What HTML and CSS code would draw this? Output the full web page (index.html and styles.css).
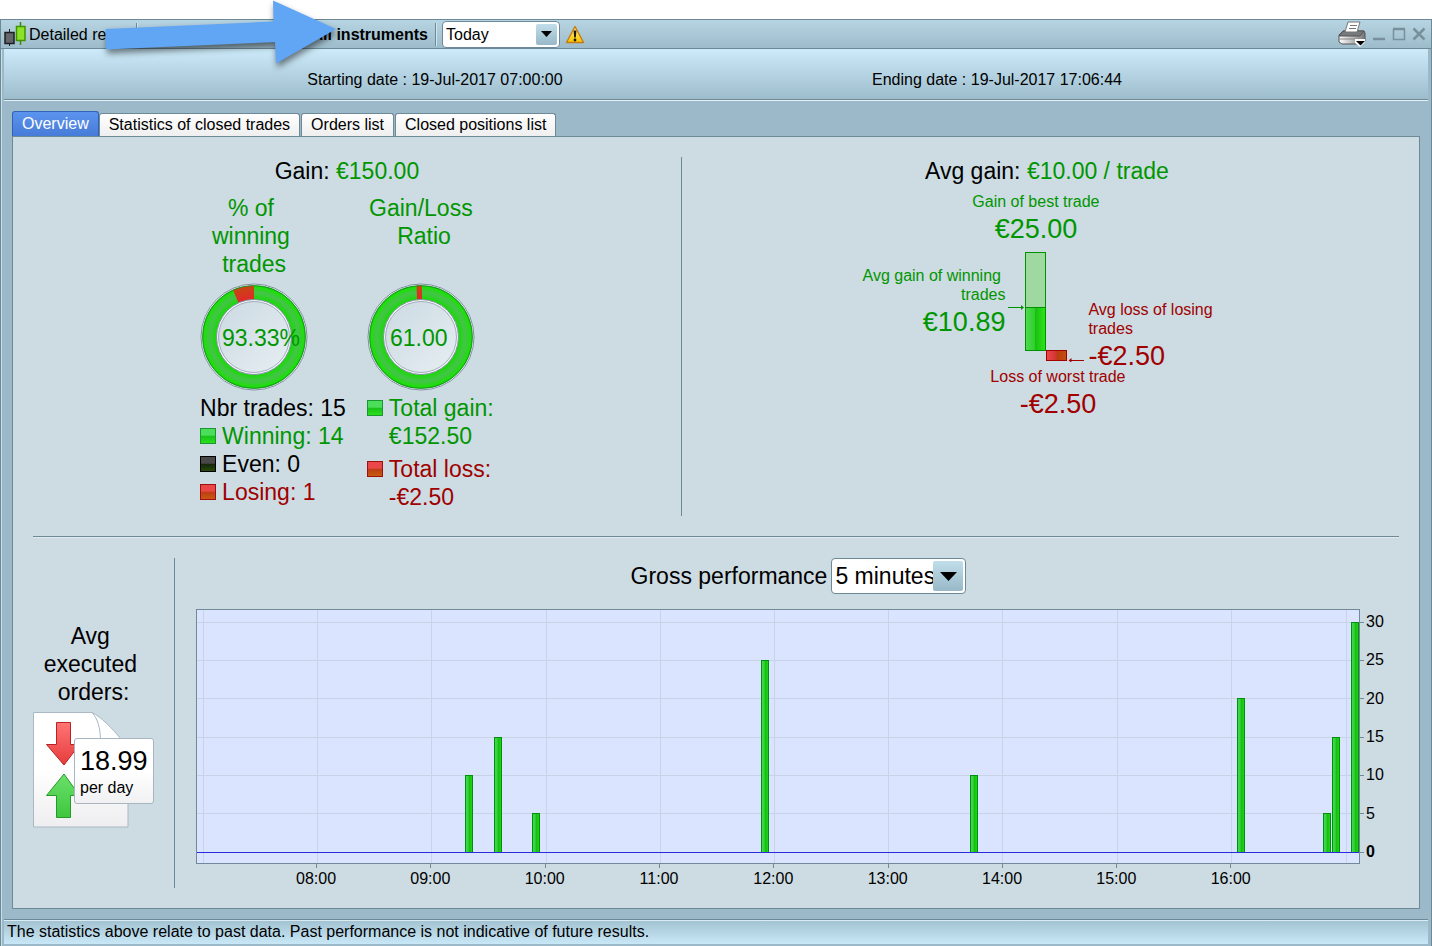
FILE: index.html
```html
<!DOCTYPE html>
<html lang="en">
<head>
<meta charset="utf-8">
<title>Detailed report</title>
<link rel="stylesheet" href="styles.css">
</head>
<body>
<div class="window">
  <header class="titlebar">
    <svg class="app-icon" width="25" height="24" viewBox="0 0 25 24" aria-hidden="true">
      <path d="M6.500 7v17" stroke="#222" stroke-width="1"/>
      <rect x="2" y="10.500" width="9" height="11" fill="#63666b" stroke="#1d1f22" stroke-width="1.500"/>
      <path d="M17.500 0v23" stroke="#3e8a00" stroke-width="1.500"/>
      <rect x="13.500" y="4.500" width="8.500" height="14" fill="#8be22a" stroke="#429300" stroke-width="1.500"/>
    </svg>
    <span class="title">Detailed report</span>
    <span class="separator"></span>
    <strong class="instruments">All instruments</strong>
    <span class="separator"></span>
    <span class="combo combo-small">
      <select aria-label="Period"><option>Today</option><option>Yesterday</option></select>
      <span class="combo-arrow"><svg width="11" height="6" viewBox="0 0 11 6"><path d="M0 0h11L5.500 6z"/></svg></span>
    </span>
    <svg class="warning" width="20" height="19" viewBox="0 0 20 19" role="img" aria-label="Warning">
      <defs><linearGradient id="warn" x2="0" y2="1"><stop offset="0" stop-color="#fff27a"/><stop offset="1" stop-color="#f8c400"/></linearGradient></defs>
      <path d="M10 1.500L18.500 17.500H1.500z" fill="url(#warn)" stroke="#c67a16" stroke-width="1.400" stroke-linejoin="round"/>
      <path d="M8.600 5.500h2.800l-.6 7H9.200z" fill="#1c1a10"/><circle cx="10" cy="15" r="1.400" fill="#1c1a10"/>
    </svg>
    <div class="window-actions">
      <button type="button" aria-label="Print">
        <svg width="28" height="26" viewBox="0 0 28 26">
          <defs><linearGradient id="prn" x2="1" y2="0"><stop offset="0" stop-color="#fff"/><stop offset="1" stop-color="#777"/></linearGradient></defs>
          <path d="M5 10h21l1 2v8l-4 3H4l-3-2v-7z" fill="url(#prn)" stroke="#555"/>
          <path d="M5 10h21l-4 5H1z" fill="#77797b" stroke="#555"/>
          <path d="M10 1h12l-3 10H7z" fill="#fff" stroke="#777"/>
          <path d="M12 4.500h7M11 7.500h7" stroke="#777"/>
          <path d="M1 18h21" stroke="#888"/>
          <path d="M17 18h10v3l-5 5-5-4z" fill="#fff"/><path d="M18 20h9l-4.500 4.500z" fill="#000"/>
        </svg>
      </button>
      <button type="button" aria-label="Minimize"><svg width="14" height="14" viewBox="0 0 14 14"><path d="M1 12h12" stroke="#77909c" stroke-width="2.500"/></svg></button>
      <button type="button" aria-label="Maximize"><svg width="14" height="14" viewBox="0 0 14 14"><path d="M1.500 2v10.500h11V2" fill="none" stroke="#77909c" stroke-width="1.500"/><path d="M1 2h12" stroke="#77909c" stroke-width="2.500"/></svg></button>
      <button type="button" aria-label="Close"><svg width="14" height="14" viewBox="0 0 14 14"><path d="M1.500 1.500l11 11M12.500 1.500l-11 11" stroke="#77909c" stroke-width="2.500"/></svg></button>
    </div>
  </header>

  <div class="dates">
    <span>Starting date : 19-Jul-2017 07:00:00</span>
    <span>Ending date : 19-Jul-2017 17:06:44</span>
  </div>

  <main class="content">
    <nav class="tabs" role="tablist">
      <button type="button" class="tab active" role="tab" aria-selected="true">Overview</button>
      <button type="button" class="tab" role="tab">Statistics of closed trades</button>
      <button type="button" class="tab" role="tab">Orders list</button>
      <button type="button" class="tab" role="tab">Closed positions list</button>
    </nav>

    <div class="panel">
      <section class="summary">
        <div class="gain">
          <h2>Gain: <span class="green">€150.00</span></h2>
          <div class="ratios">
            <div class="ratio">
              <h3>% of&nbsp;<br>winning&nbsp;<br>trades</h3>
              <svg class="ring" width="108" height="108" viewBox="0 0 108 108" role="img" aria-label="93.33%">
                <defs>
                  <radialGradient id="ringGreen" gradientUnits="userSpaceOnUse" cx="54" cy="54" r="52">
                    <stop offset="0.740" stop-color="#1cd80c"/><stop offset="0.850" stop-color="#44c44a"/><stop offset="0.880" stop-color="#3cc83c"/><stop offset="0.960" stop-color="#1ce008"/><stop offset="1" stop-color="#12a812"/>
                  </radialGradient>
                  <radialGradient id="ringRed" gradientUnits="userSpaceOnUse" cx="54" cy="54" r="52">
                    <stop offset="0.740" stop-color="#e02a2a"/><stop offset="1" stop-color="#c44a10"/>
                  </radialGradient>
                  <linearGradient id="disc" x2="1" y2="1"><stop offset="0" stop-color="#ccdae2"/><stop offset="1" stop-color="#e6eef2"/></linearGradient>
                </defs>
                <circle cx="54" cy="54" r="53" fill="#f4f8fa" stroke="#7f8da0"/>
                <circle cx="54" cy="54" r="44.500" fill="none" stroke="url(#ringGreen)" stroke-width="14"/>
                <path d="M54 2.500A51.500 51.500 0 0 0 33 7L38.500 20A37.500 37.500 0 0 1 54 16.500z" fill="url(#ringRed)"/>
                <circle cx="54" cy="54" r="51.500" fill="none" stroke="#138f20" stroke-width="0.800"/>
                <circle cx="54" cy="54" r="37.500" fill="#f4f8fa" stroke="#7f8da0"/>
                <circle cx="54" cy="54" r="35.500" fill="url(#disc)" stroke="#8f9cac" stroke-width="0.800"/>
                <text x="22" y="63">93.33%</text>
              </svg>
              <ul class="legend">
                <li>Nbr trades: 15</li>
                <li class="green"><i class="swatch sw-green"></i>Winning: 14</li>
                <li><i class="swatch sw-black"></i>Even: 0</li>
                <li class="red"><i class="swatch sw-red"></i>Losing: 1</li>
              </ul>
            </div>
            <div class="ratio">
              <h3>Gain/Loss<br>&nbsp;Ratio</h3>
              <svg class="ring" width="108" height="108" viewBox="0 0 108 108" role="img" aria-label="61.00">
                <circle cx="54" cy="54" r="53" fill="#f4f8fa" stroke="#7f8da0"/>
                <circle cx="54" cy="54" r="44.500" fill="none" stroke="url(#ringGreen)" stroke-width="14"/>
                <path d="M55 2.500h-5.500l.5 14h5z" fill="url(#ringRed)"/>
                <circle cx="54" cy="54" r="51.500" fill="none" stroke="#138f20" stroke-width="0.800"/>
                <circle cx="54" cy="54" r="37.500" fill="#f4f8fa" stroke="#7f8da0"/>
                <circle cx="54" cy="54" r="35.500" fill="url(#disc)" stroke="#8f9cac" stroke-width="0.800"/>
                <text x="23" y="63">61.00</text>
              </svg>
              <ul class="legend totals">
                <li class="green"><i class="swatch sw-green"></i><span>Total gain:<br>€152.50</span></li>
                <li class="red"><i class="swatch sw-red"></i><span>Total loss:<br>-€2.50</span></li>
              </ul>
            </div>
          </div>
        </div>

        <div class="average">
          <h2>Avg gain: <span class="green">€10.00 / trade</span></h2>
          <div class="best green">Gain of best trade<b>€25.00</b></div>
          <div class="diagram">
            <div class="avg-win green">Avg gain of winning&nbsp;<br>trades<b>€10.89</b></div>
            <svg width="77" height="110" viewBox="0 0 77 110" aria-hidden="true">
              <defs>
                <linearGradient id="bg"><stop offset="0" stop-color="#50dc50"/><stop offset="0.450" stop-color="#2fcf2f"/><stop offset="0.500" stop-color="#18c010"/><stop offset="1" stop-color="#2fe51a"/></linearGradient>
                <linearGradient id="br"><stop offset="0" stop-color="#ea4a4a"/><stop offset="0.450" stop-color="#d63434"/><stop offset="0.550" stop-color="#b83c10"/><stop offset="1" stop-color="#c65010"/></linearGradient>
              </defs>
              <rect x="17.500" y="0.500" width="20" height="98" fill="#9fd9a1" stroke="#009000"/>
              <rect x="17.500" y="55.500" width="20" height="43" fill="url(#bg)" stroke="#009000"/>
              <rect x="38.500" y="98.500" width="20" height="10" fill="url(#br)" stroke="#a00000"/>
              <path d="M0 55.500h13" stroke="#009000"/><path d="M13 53l3 2.500-3 2.500z" fill="#009000"/>
              <path d="M63 108.500h13" stroke="#a00000"/><path d="M63.500 106l-3 2.500 3 2z" fill="#a00000"/>
            </svg>
            <div class="avg-loss red">Avg loss of losing<br>trades<b>-€2.50</b></div>
          </div>
          <div class="worst red">Loss of worst trade<b>-€2.50</b></div>
        </div>
      </section>

      <section class="performance">
        <div class="orders">
          <h3>Avg&nbsp;<br>executed&nbsp;<br>orders:</h3>
          <div class="orders-figure">
            <svg width="96" height="116" viewBox="0 0 96 116" aria-hidden="true">
              <defs>
                <linearGradient id="page" x2="0" y2="1"><stop offset="0.500" stop-color="#fff"/><stop offset="1" stop-color="#eeeef0"/></linearGradient>
                <linearGradient id="down" x2="0" y2="1"><stop offset="0" stop-color="#ff7474"/><stop offset="1" stop-color="#e63c3c"/></linearGradient>
                <linearGradient id="up" x2="0" y2="1"><stop offset="0" stop-color="#6be06b"/><stop offset="1" stop-color="#3fc63f"/></linearGradient>
              </defs>
              <path d="M.5.500H59C68 5 79 16 87 26L95 36V115H.5z" fill="url(#page)" stroke="#aab8c4"/>
              <path d="M59 .5C65 7 67 16 67.500 27" fill="none" stroke="#aab8c4"/>
              <path d="M23.500 10.500h14v22h9L31 53 13.500 32.500h10z" fill="url(#down)" stroke="#b82222" stroke-linejoin="round"/>
              <path d="M23.500 105.500h14v-22h9L31 62 13.500 83.500h10z" fill="url(#up)" stroke="#249a28" stroke-linejoin="round"/>
            </svg>
            <div class="per-day"><b>18.99</b>per day</div>
          </div>
        </div>

        <div class="graph">
          <div class="graph-head">
            <label for="step">Gross performance</label>
            <span class="combo combo-large">
              <select id="step"><option>5 minutes</option><option>1 hour</option></select>
              <span class="combo-arrow"><svg width="17" height="9" viewBox="0 0 17 9"><path d="M0 0h17L8.500 9z"/></svg></span>
            </span>
          </div>
          <div class="chart">
            <svg class="plot" viewBox="0 0 1162 253" preserveAspectRatio="none" role="img" aria-label="Gross performance">
              <defs><linearGradient id="bar"><stop offset="0" stop-color="#44d854"/><stop offset="0.400" stop-color="#38d040"/><stop offset="0.500" stop-color="#14bc10"/><stop offset="1" stop-color="#20da10"/></linearGradient></defs>
              <path class="grid" d="M6.500 0v253M120.500 0v253M234.500 0v253M349.500 0v253M463.500 0v253M577.500 0v253M691.500 0v253M805.500 0v253M920.500 0v253M1034.500 0v253M1149.500 0v253M0 12.500h1162M0 50.500h1162M0 88.500h1162M0 127.500h1162M0 165.500h1162M0 203.500h1162"/>
              <path class="ticks" d="M119.500 254v4M233.500 254v4M348.500 254v4M462.500 254v4M576.500 254v4M691.500 254v4M805.500 254v4M919.500 254v4M1033.500 254v4M1163 12.500h4M1163 50.500h4M1163 88.500h4M1163 127.500h4M1163 165.500h4M1163 203.500h4M1163 242.500h4"/>
              <g class="bars">
                <rect x="268.500" y="165.500" width="7" height="77"/>
                <rect x="297.500" y="127.500" width="7" height="115"/>
                <rect x="335.500" y="203.500" width="7" height="39"/>
                <rect x="564.500" y="50.500" width="7" height="192"/>
                <rect x="773.500" y="165.500" width="7" height="77"/>
                <rect x="1040.500" y="88.500" width="7" height="154"/>
                <rect x="1126.500" y="203.500" width="7" height="39"/>
                <rect x="1135.500" y="127.500" width="7" height="115"/>
                <rect x="1154.500" y="12.500" width="7" height="230"/>
              </g>
              <rect class="zero" x="0" y="242" width="1162" height="1"/>
            </svg>
            <div class="y-axis"><span>30</span><span>25</span><span>20</span><span>15</span><span>10</span><span>5</span><b>0</b></div>
            <div class="x-axis"><span>08:00</span><span>09:00</span><span>10:00</span><span>11:00</span><span>12:00</span><span>13:00</span><span>14:00</span><span>15:00</span><span>16:00</span></div>
          </div>
        </div>
      </section>
    </div>
  </main>

  <footer class="status">The statistics above relate to past data. Past performance is not indicative of future results.</footer>
</div>

<svg class="pointer" width="350" height="76" viewBox="0 0 350 76" aria-hidden="true">
  <path d="M105.500 29L273.500 21.500 273 .5 336 29 276 63.500 275 42 106 49.500z" fill="#61a5f5"/>
</svg>
</body>
</html>
```

FILE: styles.css
```css
* { box-sizing: border-box; }

body {
  margin: 0;
  padding-top: 19px;
  background: #fff;
  color: #000;
  font: 16px/19px "Liberation Sans", Arial, sans-serif;
}

button, select { font: inherit; color: inherit; }
h2, h3, ul { margin: 0; padding: 0; font-size: 23px; line-height: 28px; font-weight: 400; }
svg { display: block; }

.green { color: #009600; }
.red { color: #a00000; }

.window {
  display: flex;
  flex-direction: column;
  min-height: calc(100vh - 19px);
  border: 1px solid #6d8996;
  padding: 0 3px 2px;
  background: #9cb9c9;
  box-shadow: inset 1px 1px #c6dfea;
}

/* Title bar */
.titlebar {
  display: flex;
  align-items: center;
  height: 29px;
  margin: 0 -3px;
  padding: 0 5px 0 2px;
  border-bottom: 1px solid #6d8996;
  background: linear-gradient(#b7d4e2, #9dbccb);
}
.title { width: 107px; margin-left: 1px; white-space: nowrap; }
.separator { width: 2px; height: 23px; border-left: 1px solid #6d8996; border-right: 1px solid #d3e6ef; }
.instruments { width: 290px; margin-right: 7px; text-align: right; white-space: nowrap; }
.combo { position: relative; display: inline-block; }
.combo select {
  appearance: none;
  display: block;
  width: 100%;
  height: 100%;
  margin: 0;
  padding: 0 3px;
  border: 1px solid #6d8996;
  border-radius: 4px;
  background: #fff;
}
.combo-arrow {
  position: absolute;
  display: grid;
  place-items: center;
  border-radius: 2px;
  background: linear-gradient(#c0deea, #98b8c8);
  pointer-events: none;
}
.combo-small { width: 118px; height: 27px; margin-left: 5px; }
.combo-small .combo-arrow { top: 3px; right: 3px; bottom: 3px; width: 21px; }
.combo-large { width: 135px; height: 36px; }
.combo-large .combo-arrow { top: 3px; right: 3px; bottom: 3px; width: 30px; }
.warning { margin-left: 5px; }
.window-actions { display: flex; align-items: center; gap: 6px; margin-left: auto; }
.window-actions button { padding: 0; border: 0; background: none; }

.dates {
  display: grid;
  grid-template-columns: 1fr 1fr;
  padding: 21px 150px 10px;
  height: 52px;
  border-bottom: 1px solid #e4f2f8;
  background: linear-gradient(#cceaf9, #9dbccb);
  box-shadow: inset 0 -1px #6d8996;
  text-align: center;
}

/* Tabs and panel */
.content { flex: 1; display: flex; flex-direction: column; padding: 10px 8px; }
.tabs { display: flex; align-items: flex-end; gap: 1px; }
.tab {
  height: 23px;
  padding: 0 9px;
  border: 1px solid #6d8996;
  border-bottom: 0;
  border-radius: 3px 3px 0 0;
  background: linear-gradient(#fff, #efefef);
  line-height: 22px;
  white-space: nowrap;
}
.tab.active {
  height: 25px;
  margin-right: -1px;
  border-color: #2f62b8;
  background: linear-gradient(#5b94ee, #477bd8);
  color: #fff;
}
.panel {
  flex: 1;
  display: flex;
  flex-direction: column;
  padding: 20px;
  border: 1px solid #6d8996;
  background: #cddbe2;
}

/* Upper half */
.summary {
  display: grid;
  grid-template-columns: 19fr 21fr;
  padding-bottom: 20px;
  border-bottom: 1px solid #6d8996;
  box-shadow: 0 1px #dfe9ee;
}
.gain {
  min-height: 359px;
  padding-right: 20px;
  border-right: 1px solid #6d8996;
  text-align: center;
}
.ratios { display: flex; justify-content: center; gap: 21px; margin-top: 9px; text-align: left; }
.ratio h3 { width: 108px; height: 84px; margin-bottom: 5px; color: #009600; text-align: center; }
.ring text { fill: #009600; font-size: 23px; }
.legend { margin-top: 3px; list-style: none; white-space: nowrap; }
.legend li { display: flex; gap: 6px; }
.totals { display: grid; gap: 5px; }
.swatch { width: 16px; height: 16px; margin-top: 6px; border: 1px solid; }
.sw-green { border-color: #1c9632; background: linear-gradient(#4ade5a 45%, #18c018 50%, #2be01c); }
.sw-black { border-color: #000; background: linear-gradient(#484848 45%, #16240c 50%, #244a08); }
.sw-red { border-color: #a01010; background: linear-gradient(#ea4848 45%, #bc3c14 50%, #c85a10); }

.average { padding-left: 13px; text-align: center; }
.average b, .per-day b { display: block; font-size: 27px; line-height: 36px; font-weight: 400; }
.best { margin-top: 7px; padding-right: 22px; }
.diagram { display: grid; grid-template-columns: 1fr 77px 1fr; gap: 3px; margin-top: 5px; }
.avg-win { padding-top: 14px; text-align: right; }
.avg-loss { padding-top: 48px; text-align: left; }
.worst { margin-top: -7px; padding-left: 22px; }

/* Lower half */
.performance { flex: 1; display: flex; gap: 21px; padding-top: 21px; }
.orders {
  display: flex;
  flex-direction: column;
  justify-content: center;
  width: 142px;
  padding: 4px 20px 0 0;
  border-right: 1px solid #6d8996;
}
.orders h3 { margin-bottom: 6px; text-align: center; }
.orders-figure { position: relative; }
.per-day {
  position: absolute;
  top: 26px;
  left: 41px;
  width: 80px;
  height: 66px;
  padding: 5px;
  border: 1px solid #a8b6c2;
  border-radius: 3px;
  background: linear-gradient(#fff 50%, #f1f1f3);
}
.per-day b { line-height: 34px; }

.graph { flex: 1; display: flex; flex-direction: column; min-width: 0; }
.graph-head {
  display: flex;
  justify-content: center;
  align-items: center;
  gap: 4px;
  padding-left: 2px;
  font-size: 23px;
  line-height: 28px;
}
.chart {
  flex: 1;
  display: grid;
  grid-template-columns: 1fr 39px;
  grid-template-rows: 1fr 24px;
  margin-top: 15px;
}
.plot {
  width: 100%;
  height: 100%;
  border: 1px solid #72899a;
  background: #dae4ff;
  overflow: visible;
}
.grid { fill: none; stroke: #c9d3e8; }
.ticks { fill: none; stroke: #72899a; }
.bars { fill: url(#bar); stroke: #009010; }
.zero { fill: #2a2ae0; }
.y-axis { display: grid; grid-template-rows: repeat(7, 1fr); align-items: center; margin: -7px 0; padding-left: 6px; }
.x-axis {
  display: grid;
  grid-template-columns: repeat(9, 1fr);
  align-items: end;
  padding: 0 6.2% 0 5.4%;
  text-align: center;
}

.status {
  height: 25px;
  padding: 2px 3px;
  border-top: 1px solid #6d8996;
  background: linear-gradient(#a3c2d1, #c9e8f7);
  box-shadow: inset 0 1px #d9ebf3;
  white-space: nowrap;
}

/* Callout drawn over the window */
.pointer { position: absolute; top: 0; left: 0; pointer-events: none; filter: drop-shadow(1px 4px 3px rgba(0, 0, 0, 0.5)); }
```
